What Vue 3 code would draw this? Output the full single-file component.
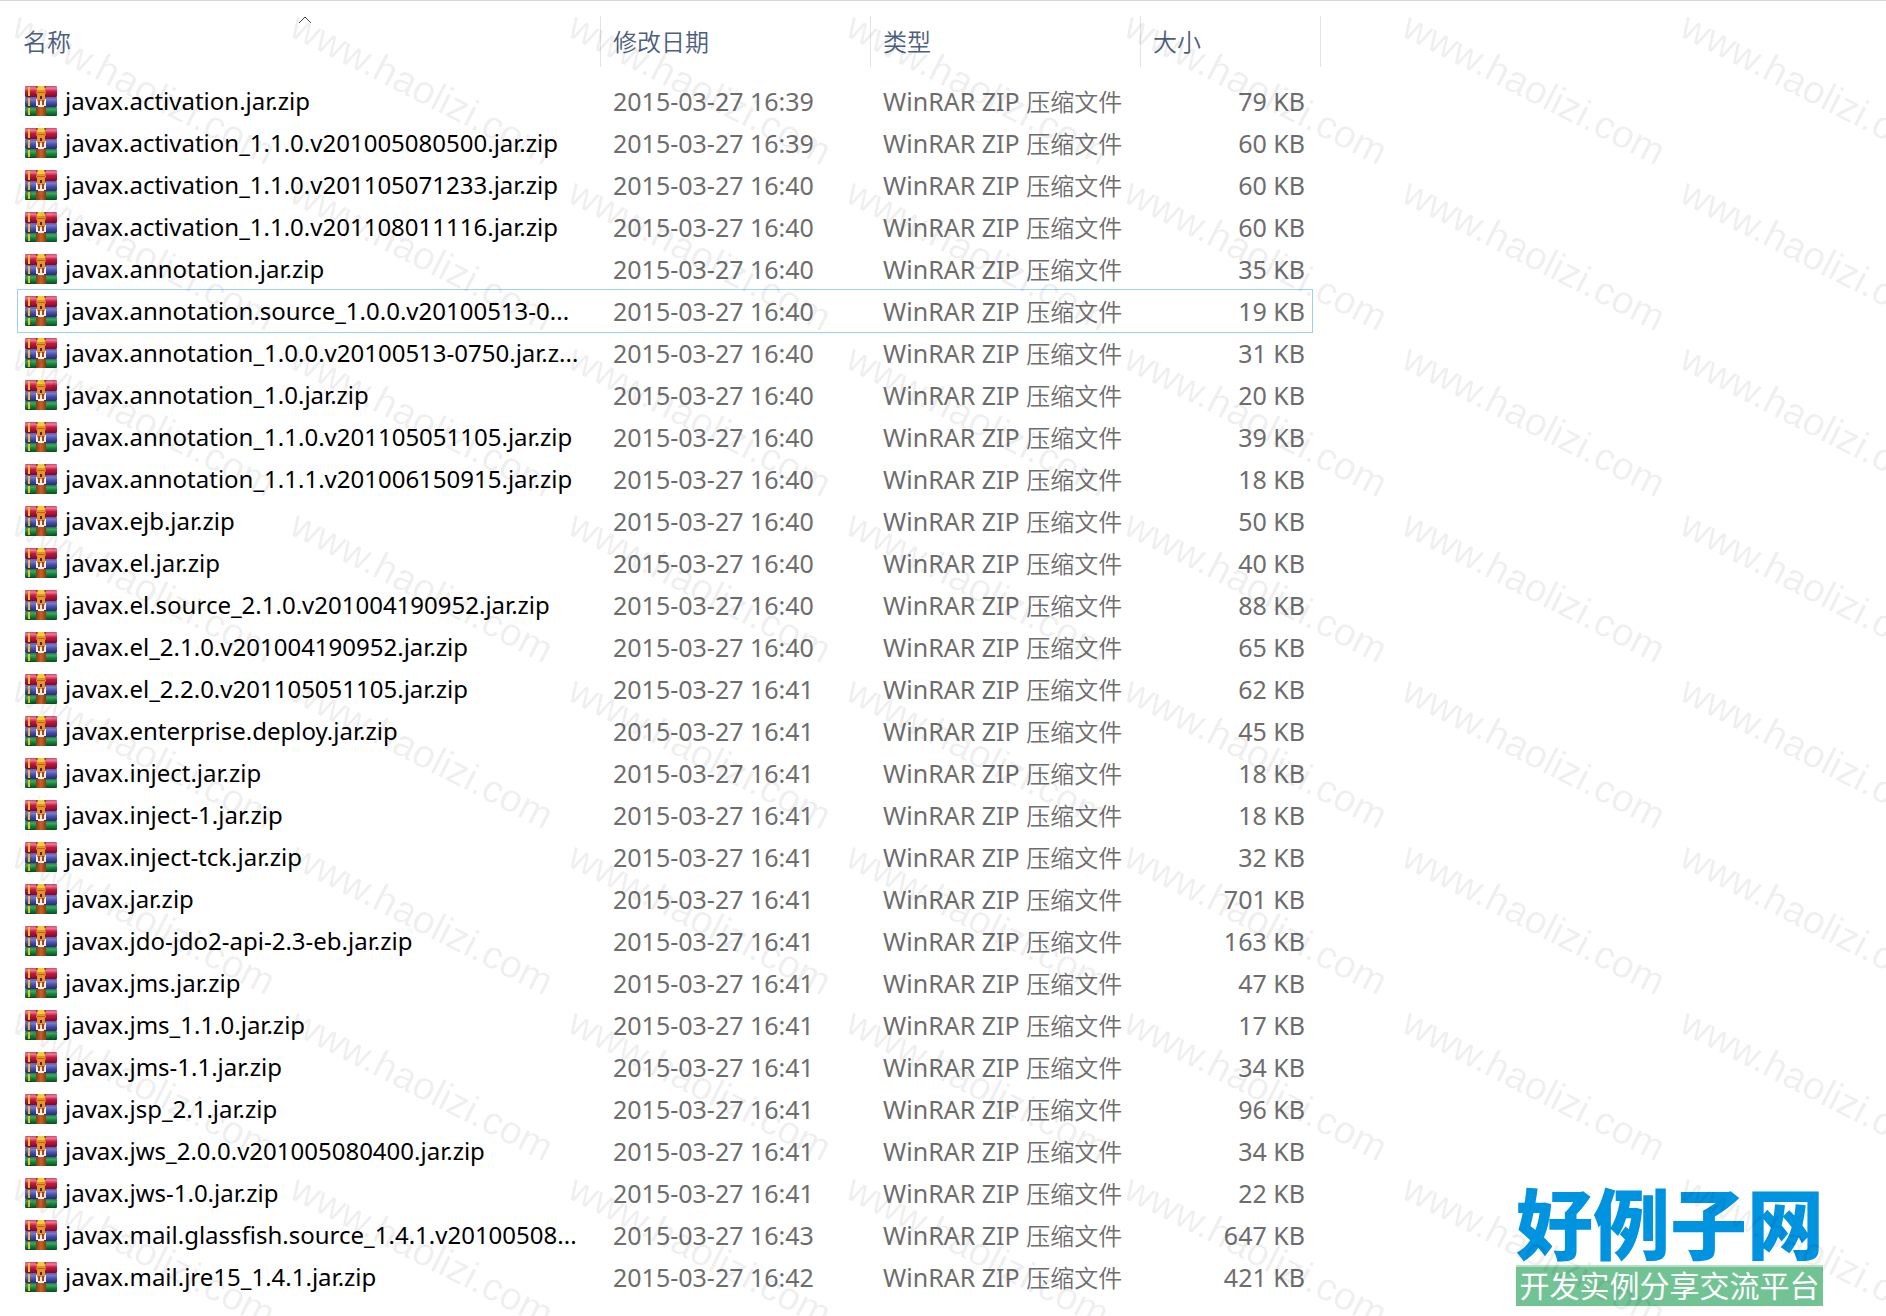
<script setup>
const headers = [
  { key: 'name', label: '名称', sorted: true },
  { key: 'date', label: '修改日期' },
  { key: 'type', label: '类型' },
  { key: 'size', label: '大小' },
]

const files = [
  ['javax.activation.jar.zip', '16:39', 79],
  ['javax.activation_1.1.0.v201005080500.jar.zip', '16:39', 60],
  ['javax.activation_1.1.0.v201105071233.jar.zip', '16:40', 60],
  ['javax.activation_1.1.0.v201108011116.jar.zip', '16:40', 60],
  ['javax.annotation.jar.zip', '16:40', 35],
  ['javax.annotation.source_1.0.0.v20100513-0...', '16:40', 19],
  ['javax.annotation_1.0.0.v20100513-0750.jar.z...', '16:40', 31],
  ['javax.annotation_1.0.jar.zip', '16:40', 20],
  ['javax.annotation_1.1.0.v201105051105.jar.zip', '16:40', 39],
  ['javax.annotation_1.1.1.v201006150915.jar.zip', '16:40', 18],
  ['javax.ejb.jar.zip', '16:40', 50],
  ['javax.el.jar.zip', '16:40', 40],
  ['javax.el.source_2.1.0.v201004190952.jar.zip', '16:40', 88],
  ['javax.el_2.1.0.v201004190952.jar.zip', '16:40', 65],
  ['javax.el_2.2.0.v201105051105.jar.zip', '16:41', 62],
  ['javax.enterprise.deploy.jar.zip', '16:41', 45],
  ['javax.inject.jar.zip', '16:41', 18],
  ['javax.inject-1.jar.zip', '16:41', 18],
  ['javax.inject-tck.jar.zip', '16:41', 32],
  ['javax.jar.zip', '16:41', 701],
  ['javax.jdo-jdo2-api-2.3-eb.jar.zip', '16:41', 163],
  ['javax.jms.jar.zip', '16:41', 47],
  ['javax.jms_1.1.0.jar.zip', '16:41', 17],
  ['javax.jms-1.1.jar.zip', '16:41', 34],
  ['javax.jsp_2.1.jar.zip', '16:41', 96],
  ['javax.jws_2.0.0.v201005080400.jar.zip', '16:41', 34],
  ['javax.jws-1.0.jar.zip', '16:41', 22],
  ['javax.mail.glassfish.source_1.4.1.v20100508...', '16:43', 647],
  ['javax.mail.jre15_1.4.1.jar.zip', '16:42', 421],
].map(([name, time, size]) => ({ name, date: `2015-03-27 ${time}`, size: `${size} KB` }))

const focusedRow = 5
const tileCount = 56
</script>

<template>
  <main class="explorer">
    <svg class="defs" aria-hidden="true">
      <defs>
        <linearGradient id="red" x1="0" y1="0" x2="0" y2="1">
          <stop offset="0" stop-color="#c9486a" /><stop offset=".2" stop-color="#ea7c98" />
          <stop offset=".5" stop-color="#c8183f" /><stop offset="1" stop-color="#780c22" />
        </linearGradient>
        <linearGradient id="blue" x1="0" y1="0" x2="0" y2="1">
          <stop offset="0" stop-color="#5a5cb4" /><stop offset=".25" stop-color="#7479ca" />
          <stop offset=".6" stop-color="#454aa6" /><stop offset="1" stop-color="#2a2974" />
        </linearGradient>
        <linearGradient id="green" x1="0" y1="0" x2="0" y2="1">
          <stop offset="0" stop-color="#1f7a3a" /><stop offset=".25" stop-color="#3fa85c" />
          <stop offset=".6" stop-color="#14803a" /><stop offset="1" stop-color="#0b4a20" />
        </linearGradient>
        <linearGradient id="strap" x1="0" y1="0" x2="1" y2="0">
          <stop offset="0" stop-color="#8e3c10" /><stop offset=".5" stop-color="#c8622a" />
          <stop offset="1" stop-color="#8e3c10" />
        </linearGradient>
        <symbol id="archive" viewBox="0 0 32 30">
          <rect x="0" y="0" width="32" height="11" rx="1" fill="url(#red)" />
          <rect x="0" y="11" width="32" height="10" rx="1" fill="url(#blue)" />
          <rect x="0" y="21" width="32" height="9" rx="1" fill="url(#green)" />
          <path d="M3 1h2v9H3zM3 12h2v8H3zM3 22h2v7H3z" fill="#f0c030" />
          <path d="M11 21h10v9H11z" fill="url(#strap)" />
          <path d="M11 0h2v2h-2zM19 0h2v2h-2z" fill="#7a4a14" />
          <path d="M13 0h6l1 3 1 4-1 1v7h-8V8l-1-1 1-4z" fill="#e8922c" />
          <path d="M13 0h6l1 4h-8z" fill="#f4cc3c" />
          <path d="M12 6h8v1h-8z" fill="#b8641a" />
          <path d="M15 10h2v3h-2z" fill="#4a2408" />
          <path d="M11 13h1v2h8v-2h1v7h-2v1h-6v-1h-2z" fill="#f4f0ee" />
          <path d="M13 14h2v5h-2zM17 14h2v5h-2z" fill="#a8481a" />
        </symbol>
      </defs>
    </svg>

    <table class="files">
      <colgroup>
        <col v-for="h in headers" :key="h.key" :class="`col-${h.key}`" />
      </colgroup>
      <thead>
        <tr>
          <th v-for="h in headers" :key="h.key" scope="col" :aria-sort="h.sorted ? 'ascending' : 'none'">
            <button type="button" class="sort">{{ h.label }}</button>
            <svg v-if="h.sorted" class="caret" viewBox="0 0 14 8" aria-hidden="true">
              <path d="M1 7 7 1l6 6" fill="none" stroke="#444" />
            </svg>
          </th>
        </tr>
      </thead>
      <tbody>
        <tr v-for="(f, i) in files" :key="f.name" :class="{ focused: i === focusedRow }">
          <td class="name">
            <div class="entry">
              <svg class="icon" aria-hidden="true"><use href="#archive" /></svg>
              <span>{{ f.name }}</span>
            </div>
          </td>
          <td>{{ f.date }}</td>
          <td>WinRAR ZIP <span class="cjk">压缩文件</span></td>
          <td class="size">{{ f.size }}</td>
        </tr>
      </tbody>
    </table>

    <aside class="brand">
      <strong>好例子网</strong>
      <p>开发实例分享交流平台</p>
    </aside>

    <div class="watermark" aria-hidden="true">
      <div v-for="n in tileCount" :key="n" class="tile"><span>www.haolizi.com</span></div>
    </div>
  </main>
</template>

<style>
body {
  background: #fff;
}
</style>

<style scoped>
.explorer {
  position: relative;
  box-sizing: border-box;
  min-height: 100vh;
  padding: 15px 0 16px 17px;
  border-top: 1px solid #d6d6d6;
  overflow: hidden;
  font-family: "Noto Sans", "Noto Sans CJK SC", sans-serif;
  font-size: 25px;
  line-height: 40px;
  color: #6d6d6d;
}

.defs {
  position: absolute;
  width: 0;
  height: 0;
}

.files {
  width: 1304px;
  table-layout: fixed;
  border-collapse: separate;
  border-spacing: 0;
}

.col-name {
  width: 584px;
}

.col-date,
.col-type {
  width: 270px;
}

.col-size {
  width: 180px;
}

th {
  position: relative;
  height: 51px;
  padding: 0;
  border-right: 1px solid #e3e3e3;
  text-align: left;
  vertical-align: top;
}

thead::after {
  content: "";
  display: block;
  height: 13px;
}

.sort {
  display: block;
  width: 100%;
  padding: 0 0 0 12px;
  border: 0;
  background: none;
  color: #4c607a;
  font: 350 24px/50px "Noto Sans CJK SC", sans-serif;
  text-align: left;
}

th:first-child .sort {
  padding-left: 6px;
}

.caret {
  position: absolute;
  top: 0;
  left: 281px;
  width: 14px;
  height: 8px;
}

td {
  height: 42px;
  padding: 0 0 0 12px;
  white-space: nowrap;
}

.name {
  padding-left: 8px;
  color: #000;
  font-size: 24px;
}

.entry {
  display: flex;
  align-items: center;
  gap: 8px;
}

.icon {
  width: 32px;
  height: 30px;
}

.cjk {
  font-size: 24px;
  font-weight: 350;
  line-height: 24px;
}

.size {
  padding-right: 16px;
  text-align: right;
}

.focused {
  position: relative;
}

.focused::after {
  content: "";
  position: absolute;
  inset: -1px 8px -1px 0;
  border: 1px solid #99d1ff;
}

.brand {
  position: absolute;
  right: 63px;
  bottom: 10px;
  width: 307px;
  text-align: center;
  font-family: "Noto Sans CJK SC", sans-serif;
  white-space: nowrap;
}

.brand strong {
  display: block;
  padding-bottom: 2px;
  color: #0093e0;
  font-size: 77px;
  font-weight: 900;
  line-height: 84px;
}

.brand p {
  margin: 0;
  padding-bottom: 4px;
  border-top: 2px solid #b4dfc6;
  background: #72c394;
  color: #fff;
  font-size: 30px;
  line-height: 35px;
}

.watermark {
  position: absolute;
  inset: 0;
  display: grid;
  grid-template-columns: repeat(7, 278px);
  grid-auto-rows: 166px;
  overflow: hidden;
  pointer-events: none;
}

.tile span {
  display: block;
  width: max-content;
  padding-left: 24px;
  color: rgba(0, 0, 0, 0.07);
  font: 39px/26px "Liberation Sans", sans-serif;
  transform: rotate(27deg);
  transform-origin: 0 0;
}
</style>
